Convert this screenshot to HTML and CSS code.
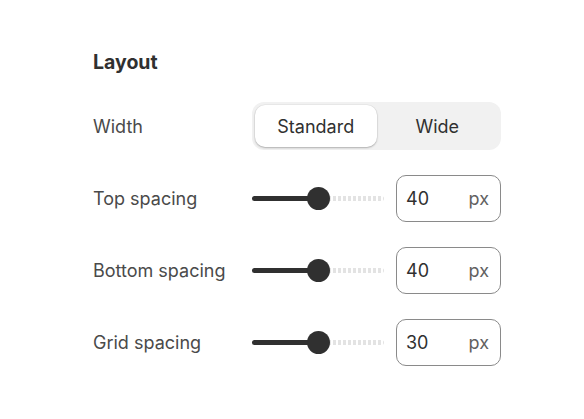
FILE: index.html
```html
<!DOCTYPE html>
<html>
<head>
<meta charset="utf-8">
<link rel="stylesheet" href="styles.css">
</head>
<body>
<div class="panel">
  <h2 class="title">Layout</h2>
  <div class="rows">
    <div class="row">
      <div class="label">Width</div>
      <div class="segmented">
        <button class="seg seg-active">Standard</button>
        <button class="seg">Wide</button>
      </div>
    </div>
    <div class="row">
      <div class="label">Top spacing</div>
      <div class="control">
        <div class="slider">
          <div class="track-fill" style="width:66px"></div>
          <div class="track-rest"></div>
          <div class="thumb" style="left:55px"></div>
        </div>
        <div class="field"><span class="value">40</span><span class="unit">px</span></div>
      </div>
    </div>
    <div class="row">
      <div class="label">Bottom spacing</div>
      <div class="control">
        <div class="slider">
          <div class="track-fill" style="width:66px"></div>
          <div class="track-rest"></div>
          <div class="thumb" style="left:55px"></div>
        </div>
        <div class="field"><span class="value">40</span><span class="unit">px</span></div>
      </div>
    </div>
    <div class="row">
      <div class="label">Grid spacing</div>
      <div class="control">
        <div class="slider">
          <div class="track-fill" style="width:66px"></div>
          <div class="track-rest"></div>
          <div class="thumb" style="left:55px"></div>
        </div>
        <div class="field"><span class="value">30</span><span class="unit">px</span></div>
      </div>
    </div>
  </div>
</div>
</body>
</html>
```
FILE: styles.css
```css
* { box-sizing: border-box; }
html, body { margin: 0; background: #ffffff; }
body {
  font-family: Inter, "Noto Sans", sans-serif;
  color: #303030;
  width: 584px;
  height: 419px;
}
.panel {
  padding: 50px 0 0 93px;
  width: 501px;
}
.title {
  margin: 0;
  font-size: 19.5px;
  line-height: 24px;
  font-weight: 650;
  color: #303030;
}
.rows {
  margin-top: 28px;
  display: flex;
  flex-direction: column;
  gap: 24px;
}
.row {
  display: flex;
  align-items: center;
  height: 48px;
}
.label {
  width: 159px;
  font-size: 18px;
  color: #4a4a4a;
}
.segmented {
  width: 249px;
  height: 48px;
  background: #f1f1f1;
  border-radius: 12px;
  padding: 3px;
  display: flex;
}
.seg {
  flex: 1;
  border: none;
  background: transparent;
  font-family: inherit;
  font-size: 18px;
  color: #303030;
  border-radius: 10px;
  padding: 0;
}
.seg-active {
  background: #ffffff;
  box-shadow: 0 1px 2px rgba(0,0,0,0.25), 0 0 0 0.5px rgba(0,0,0,0.06);
}
.control {
  width: 249px;
  display: flex;
  align-items: center;
  gap: 12px;
}
.slider {
  position: relative;
  width: 132px;
  height: 24px;
}
.track-fill {
  position: absolute;
  left: 0;
  top: 9.5px;
  height: 5px;
  background: #303030;
  border-radius: 3px;
}
.track-rest {
  position: absolute;
  left: 76px;
  right: 0;
  top: 9.5px;
  height: 5px;
  border-radius: 3px;
  background: repeating-linear-gradient(to right, #e3e3e3 0 3px, transparent 3px 5px);
}
.thumb {
  position: absolute;
  top: 0.5px;
  width: 23px;
  height: 23px;
  border-radius: 50%;
  background: #303030;
}
.field {
  width: 105px;
  height: 47px;
  border: 1px solid #8a8a8a;
  border-radius: 10px;
  display: flex;
  align-items: center;
  justify-content: space-between;
  padding: 0 11px 0 9px;
  font-size: 18px;
}
.value { color: #303030; }
.unit { color: #616161; }
```
